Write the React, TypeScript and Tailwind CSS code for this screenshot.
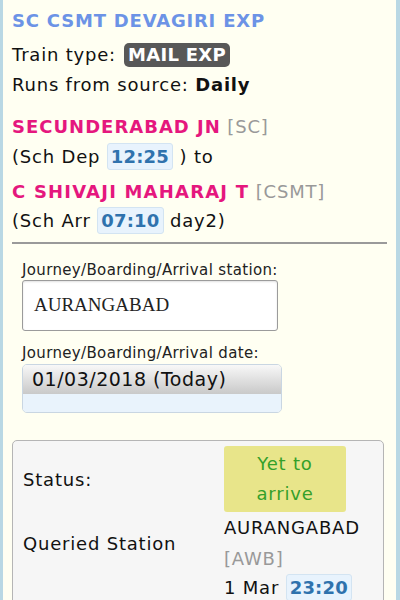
import React from 'react';

const Time: React.FC<{ t: string }> = ({ t }) => (
  <span className="inline-block rounded-[3px] border border-[#d3e4f2] bg-[#e8f3fd] px-[3px] py-[2px] leading-[21px] font-bold tracking-[0.2px] text-[#2f72ad]">
    {t}
  </span>
);

const App: React.FC = () => {
  return (
    <div
      className="h-[600px] w-[400px] overflow-hidden border-l-[3px] border-r-[4px] border-[#b9d8e4] bg-[#fffff2] text-[18px] tracking-[0.8px] text-[#111]"
      style={{ fontFamily: '"DejaVu Sans", Verdana, sans-serif' }}
    >
      <div className="pl-[9px] pr-[9px] pt-[9px]">
        <div className="text-[18px] font-bold leading-[24px] text-[#6c93e6]">SC CSMT DEVAGIRI EXP</div>

        <div className="mt-[10px] flex items-center leading-[24px]">
          <span>Train type:</span>
          <span className="ml-[8px] rounded-[5px] bg-[#585858] px-[4px] text-[18px] font-bold leading-[24px] tracking-[0.3px] text-white">MAIL EXP</span>
        </div>
        <div className="mt-[6px] leading-[24px]">
          Runs from source: <span className="font-bold">Daily</span>
        </div>

        <div className="mt-[18px] leading-[24px]">
          <span className="font-bold tracking-[1px] text-[#e5177e]">SECUNDERABAD JN</span>{' '}
          <span className="text-[#999]">[SC]</span>
        </div>
        <div className="mt-[4px] leading-[28px]">
          (Sch Dep <Time t="12:25" /> ) to
        </div>
        <div className="mt-[9px] leading-[24px]">
          <span className="font-bold tracking-[1.2px] text-[#e5177e]">C SHIVAJI MAHARAJ T</span>{' '}
          <span className="text-[#999]">[CSMT]</span>
        </div>
        <div className="mt-[3px] leading-[28px]">
          (Sch Arr <Time t="07:10" /> day2)
        </div>

        <div className="mt-[7px] h-[2px] w-[375px] bg-[#9a9a9a]" />

        <div className="pl-[10px]">
          <div className="mt-[16px] text-[15px] leading-[20px] tracking-[0.35px] text-[#222]">Journey/Boarding/Arrival station:</div>
          <div
            className="mt-[0px] flex h-[51px] w-[256px] items-center rounded-[3px] border border-[#9b9b9b] bg-white pl-[11px] text-[19px] tracking-normal text-[#222] shadow-[inset_0_1px_2px_rgba(0,0,0,0.12)]"
            style={{ fontFamily: '"Liberation Serif", "Times New Roman", serif' }}
          >
            AURANGABAD
          </div>
          <div className="mt-[12px] text-[15px] leading-[20px] tracking-[0.35px] text-[#222]">Journey/Boarding/Arrival date:</div>
          <div className="mt-[1px] h-[49px] w-[260px] overflow-hidden rounded-[5px] border border-[#c9d6e2]">
            <div className="flex h-[29px] items-center bg-gradient-to-b from-[#f8f8f8] to-[#c9c9c9] pl-[9px] text-[19px] tracking-[0.5px] text-[#111]">
              01/03/2018 (Today)
            </div>
            <div className="h-[20px] bg-[#e9f3fc]" />
          </div>
        </div>

        <div className="mt-[27px] w-[372px] rounded-[5px] border-[1.5px] border-[#b5b5b5] bg-[#f6f6f6] pl-[10px] pt-[5px]">
          <div className="flex items-center">
            <div className="w-[201px]">Status:</div>
            <div className="w-[122px] rounded-[3px] bg-[#e8e58a] py-[3px] text-center leading-[30px] text-[#34a02a]">
              Yet to
              <br />
              arrive
            </div>
          </div>
          <div className="flex items-center">
            <div className="w-[201px]">Queried Station</div>
            <div className="leading-[31px]">
              AURANGABAD
              <br />
              <span className="text-[#999]">[AWB]</span>
            </div>
          </div>
          <div className="flex items-start">
            <div className="w-[201px] pt-[22px]">Expected Arrival</div>
            <div className="leading-[28px]">
              1 Mar <Time t="23:20" />
            </div>
          </div>
        </div>
      </div>
    </div>
  );
};

export default App;
